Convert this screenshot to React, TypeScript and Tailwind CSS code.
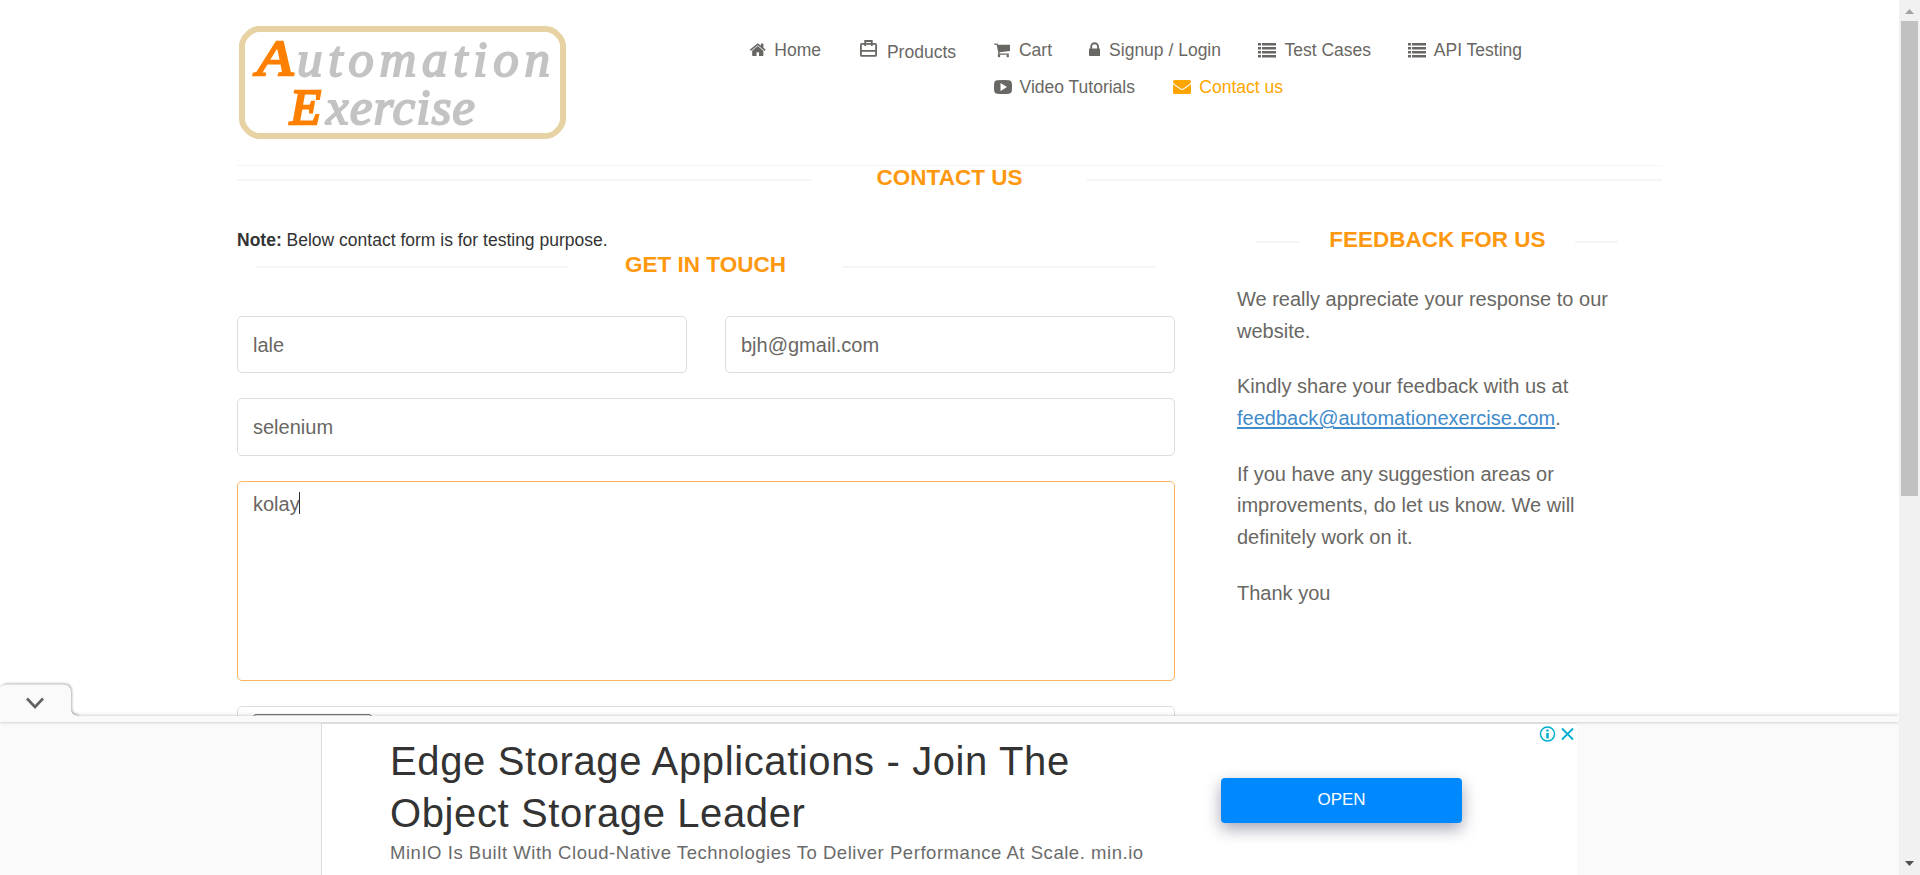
import React, { ReactNode } from "react";

const Home = () => (
  <svg width="15.6" height="17.5" viewBox="97 0 1600 1792" fill="currentColor">
    <path d="M1472 992v480q0 26-19 45t-45 19h-384v-384h-256v384h-384q-26 0-45-19t-19-45v-480q0-1 .5-3t.5-3l575-474 575 474q1 2 1 6zm223-69l-62 74q-8 9-21 11h-3q-13 0-21-7l-692-577-692 577q-12 8-24 7-13-2-21-11l-62-74q-8-10-7-23.5t11-21.5l719-599q32-26 76-26t76 26l244 204v-195q0-14 9-23t23-9h192q14 0 23 9t9 23v408l219 182q10 8 11 21.5t-7 23.5z" />
  </svg>
);
const Cart = () => (
  <svg width="16.25" height="17.5" viewBox="64 0 1664 1792" fill="currentColor">
    <path d="M704 1536q0 52-38 90t-90 38-90-38-38-90 38-90 90-38 90 38 38 90zm896 0q0 52-38 90t-90 38-90-38-38-90 38-90 90-38 90 38 38 90zm128-1088v512q0 24-16.5 42.5t-40.5 21.5l-1044 122q13 60 13 70 0 16-24 64h920q26 0 45 19t19 45-19 45-45 19h-1024q-26 0-45-19t-19-45q0-11 8-31.5t16-36 21.5-40 15.5-29.5l-177-823h-204q-26 0-45-19t-19-45 19-45 45-19h256q16 0 28.5 6.5t19.5 15.5 13 24.5 8 26 5.5 29.5 4.5 26h1201q26 0 45 19t19 45z" />
  </svg>
);
const Lock = () => (
  <svg width="11.25" height="17.5" viewBox="320 0 1152 1792" fill="currentColor">
    <path d="M640 768h512v-192q0-106-75-181t-181-75-181 75-75 181v192zm832 96v576q0 40-28 68t-68 28h-960q-40 0-68-28t-28-68v-576q0-40 28-68t68-28h32v-192q0-184 132-316t316-132 316 132 132 316v192h32q40 0 68 28t28 68z" />
  </svg>
);
const List = () => (
  <svg width="18" height="15" viewBox="0 0 18 15" fill="currentColor">
    <path d="M0 0h3v2.5H0zM0 4h3v2.5H0zM0 8h3v2.5H0zM0 12h3v2.5H0zM4 0H18v2.5H4zM4 4H18v2.5H4zM4 8H18v2.5H4zM4 12H18v2.5H4z" />
  </svg>
);
const Briefcase = () => (
  <svg width="17" height="17" viewBox="0 0 17 17" fill="none" stroke="currentColor" strokeWidth="1.8">
    <rect x="0.9" y="3.9" width="15.2" height="12" rx="1" />
    <path d="M5.2 6V1h6.6v5M1 10.8h15" />
  </svg>
);
const Play = () => (
  <svg width="18" height="14" viewBox="0 0 18 14" fill="currentColor">
    <path fillRule="evenodd" d="M3 .3Q9-.3 15 .3Q17.5.4 17.8 3Q18.2 7 17.8 11Q17.5 13.5 15 13.7Q9 14.2 3 13.7Q.5 13.5.2 11Q-.2 7 .2 3Q.5.4 3 .3ZM6.5 3v8l6.5-4Z" />
  </svg>
);
const Envelope = () => (
  <svg width="18" height="14" viewBox="0 0 18 14" fill="currentColor">
    <path d="M1.5 0h15Q18 0 18 1.5Q18 3 16 4.5L10.5 8.3Q9 9.3 7.5 8.3L2 4.5Q0 3 0 1.5Q0 0 1.5 0Z" />
    <path d="M0 4.3Q.5 5 7 9.3Q9 10.5 11 9.3Q17.5 5 18 4.3V12.5Q18 14 16.5 14H1.5Q0 14 0 12.5Z" />
  </svg>
);

function Heading({ children, left, right, className }: { children: ReactNode; left: string; right: string; className: string }) {
  return (
    <h2 className={"flex h-[25px] items-center text-[22.5px] leading-[25px] font-bold whitespace-nowrap text-[#FE980F] " + className}>
      <span className={"mt-[3px] h-[2px] shrink-0 bg-[#f5f5f5] " + left} />
      <span className="flex-1 pb-[3px] text-center">{children}</span>
      <span className={"mt-[3px] h-[2px] shrink-0 bg-[#f5f5f5] " + right} />
    </h2>
  );
}

function NavItem({ icon, children, className }: { icon: ReactNode; children: ReactNode; className: string }) {
  return (
    <a className={"flex h-[22px] shrink-0 items-center whitespace-nowrap " + className}>
      <span className="flex shrink-0 items-center">{icon}</span>
      <span className="ml-auto">{children}</span>
    </a>
  );
}

const field = "rounded-[5px] border border-[#ddd] bg-white pl-[15px] text-[20px] text-[#696763]";

export default function App() {
  return (
    <div className="flex h-[875px] w-[1920px] overflow-hidden bg-white font-['Liberation_Sans',Arial,sans-serif] text-[#696763]">
      <div className="flex w-[1899px] shrink-0 flex-col">
        <div className="h-[716px] shrink-0 overflow-hidden pl-[237px]">
          <header className="flex h-[166px] w-[1425px] border-b border-[#f5f5f5]">
            <svg className="mt-[26px] ml-[2px] shrink-0" width="328" height="113" viewBox="0 0 328 113">
              <path d="M20 3H307Q313 3 318.500 8.500Q324 14 324 20V93Q324 99 318.500 104.500Q313 110 307 110H20Q14 110 8.500 104.500Q3 99 3 93V20Q3 14 8.500 8.500Q14 3 20 3Z" fill="none" stroke="#e6d2a2" strokeWidth="6" />
              <g fontFamily="'Liberation Serif', serif" fontStyle="italic" fontSize="51">
                <text x="18" y="49" fill="#ff8000" stroke="#ff8000" strokeWidth="2.5" textLength="36" lengthAdjust="spacingAndGlyphs">A</text>
                <text x="58" y="50" fill="#c3c3c3" stroke="#c3c3c3" strokeWidth="2" textLength="253" lengthAdjust="spacing">utomation</text>
                <text x="51" y="98" fill="#ff8000" stroke="#ff8000" strokeWidth="2.5" textLength="31" lengthAdjust="spacingAndGlyphs">E</text>
                <text x="87" y="98" fill="#c3c3c3" stroke="#c3c3c3" strokeWidth="2" textLength="149" lengthAdjust="spacing">xercise</text>
              </g>
            </svg>
            <nav className="ml-[183px] flex flex-col pt-[39px] text-[17.5px]">
              <div className="flex">
                <NavItem className="w-[71px]" icon={<Home />}>Home</NavItem>
                <NavItem className="ml-[39px] w-[96px] pt-[4px]" icon={<span className="-mt-[8px]"><Briefcase /></span>}>Products</NavItem>
                <NavItem className="ml-[38px] w-[58px]" icon={<Cart />}>Cart</NavItem>
                <NavItem className="ml-[37px] w-[132px]" icon={<Lock />}>Signup / Login</NavItem>
                <NavItem className="ml-[37px] w-[113px]" icon={<List />}>Test Cases</NavItem>
                <NavItem className="ml-[37px] w-[114px]" icon={<List />}>API Testing</NavItem>
              </div>
              <div className="mt-[15px] flex pl-[244px]">
                <NavItem className="w-[141px]" icon={<Play />}>Video Tutorials</NavItem>
                <NavItem className="ml-[38px] w-[110px] text-[orange]" icon={<Envelope />}>Contact us</NavItem>
              </div>
            </nav>
          </header>
          <Heading className="w-[1425px]" left="w-[575px]" right="w-[575px]">CONTACT US</Heading>
          <div className="flex">
            <main className="w-[938px] pt-[37px]">
              <p className="h-[25px] text-[17.5px] leading-[25px] text-[#333]"><b>Note:</b> Below contact form is for testing purpose.</p>
              <Heading className="ml-[19px] w-[900px]" left="w-[312px]" right="w-[313px]">GET IN TOUCH</Heading>
              <div className="mt-[38px] flex justify-between">
                <div className={"flex h-[57px] w-[450px] items-center " + field}>lale</div>
                <div className={"flex h-[57px] w-[450px] items-center " + field}>bjh@gmail.com</div>
              </div>
              <div className={"mt-[25px] flex h-[58px] items-center " + field}>selenium</div>
              <div className="mt-[25px] flex h-[200px] rounded-[5px] border border-[#fdb45e] pt-[10px] pl-[15px] text-[20px] leading-[24px]">
                kolay<span className="-ml-px h-[22px] w-px bg-[#333]" />
              </div>
              <div className="mt-[25px] h-[58px] rounded-[5px] border border-[#ddd] pt-[7px] pl-[15px]">
                <div className="h-[30px] w-[119px] rounded-[3px] border border-[#767676] bg-[#efefef]" />
              </div>
            </main>
            <aside className="ml-[62px] w-[388px] pt-[37px]">
              <Heading className="ml-[19px] w-[362px]" left="w-[44px]" right="w-[43px]">FEEDBACK FOR US</Heading>
              <div className="mt-[31px] flex flex-col gap-[24.4px] text-[20px] leading-[31.5px]">
                <p>We really appreciate your response to our<br />website.</p>
                <p>Kindly share your feedback with us at<br /><a className="text-[#428bca] underline decoration-2 underline-offset-2">feedback@automationexercise.com</a>.</p>
                <p>If you have any suggestion areas or<br />improvements, do let us know. We will<br />definitely work on it.</p>
                <p>Thank you</p>
              </div>
            </aside>
          </div>
        </div>
        <div className="relative flex h-[159px] flex-col bg-[#fafafa] shadow-[0_-1px_4px_rgba(0,0,0,0.14)]">
          <svg className="absolute -top-[36px] left-0" width="84" height="37" viewBox="0 0 84 37">
            <path d="M0 8Q2 4.500 7 4.500H63Q71 4.500 71 12.500V29Q71 35 78 36V37H0Z" fill="#fafafa" className="drop-shadow-[1px_-1px_1px_rgba(0,0,0,0.3)]" />
            <path d="M27 18.500L35 27L43 18.500" fill="none" stroke="#616161" strokeWidth="2.600" />
          </svg>
          <div className="h-[6px] shrink-0 shadow-[0_1px_3px_rgba(0,0,0,0.16)]" />
          <div className="ml-[321px] flex h-[153px] w-[1256px] border-t-2 border-l border-t-[#ddd] border-l-[#ddd] bg-white pl-[68px]">
            <div className="w-[831px] pt-[11px]">
              <div className="text-[40px] leading-[52px] tracking-[0.62px] whitespace-nowrap text-[#333]">Edge Storage Applications - Join The<br />Object Storage Leader</div>
              <div className="mt-[2px] text-[18.5px] leading-[24px] tracking-[0.54px] whitespace-nowrap text-[#6b6b6b]">MinIO Is Built With Cloud-Native Technologies To Deliver Performance At Scale. min.io</div>
            </div>
            <div className="mt-[54px] flex h-[45px] w-[241px] items-center justify-center rounded-[4px] bg-[#0088ff] pb-[1px] text-[17px] text-white shadow-[0_6px_16px_rgba(30,30,70,0.4)]">OPEN</div>
            <svg className="mt-[1px] ml-[77px]" width="35" height="18" viewBox="0 0 35 18" fill="none" stroke="#00aecd" strokeWidth="1.500">
              <circle cx="8.500" cy="9" r="7" />
              <path d="M8.500 8V13.500M8.500 4.500V6.500" strokeWidth="2.500" />
              <path d="M23 3.500L34 14.500M34 3.500L23 14.500" strokeWidth="1.800" />
            </svg>
          </div>
        </div>
      </div>
      <div className="z-10 flex w-[21px] shrink-0 flex-col items-center bg-[#f1f1f1]">
        <svg width="21" height="21" viewBox="0 0 21 21"><path d="M6 14L10.500 9L15 14Z" fill="#a3a3a3" /></svg>
        <div className="h-[475px] w-[17px] bg-[#c1c1c1]" />
        <svg className="mt-auto" width="21" height="21" viewBox="0 0 21 21"><path d="M6 7L10.500 12L15 7Z" fill="#505050" /></svg>
      </div>
    </div>
  );
}
